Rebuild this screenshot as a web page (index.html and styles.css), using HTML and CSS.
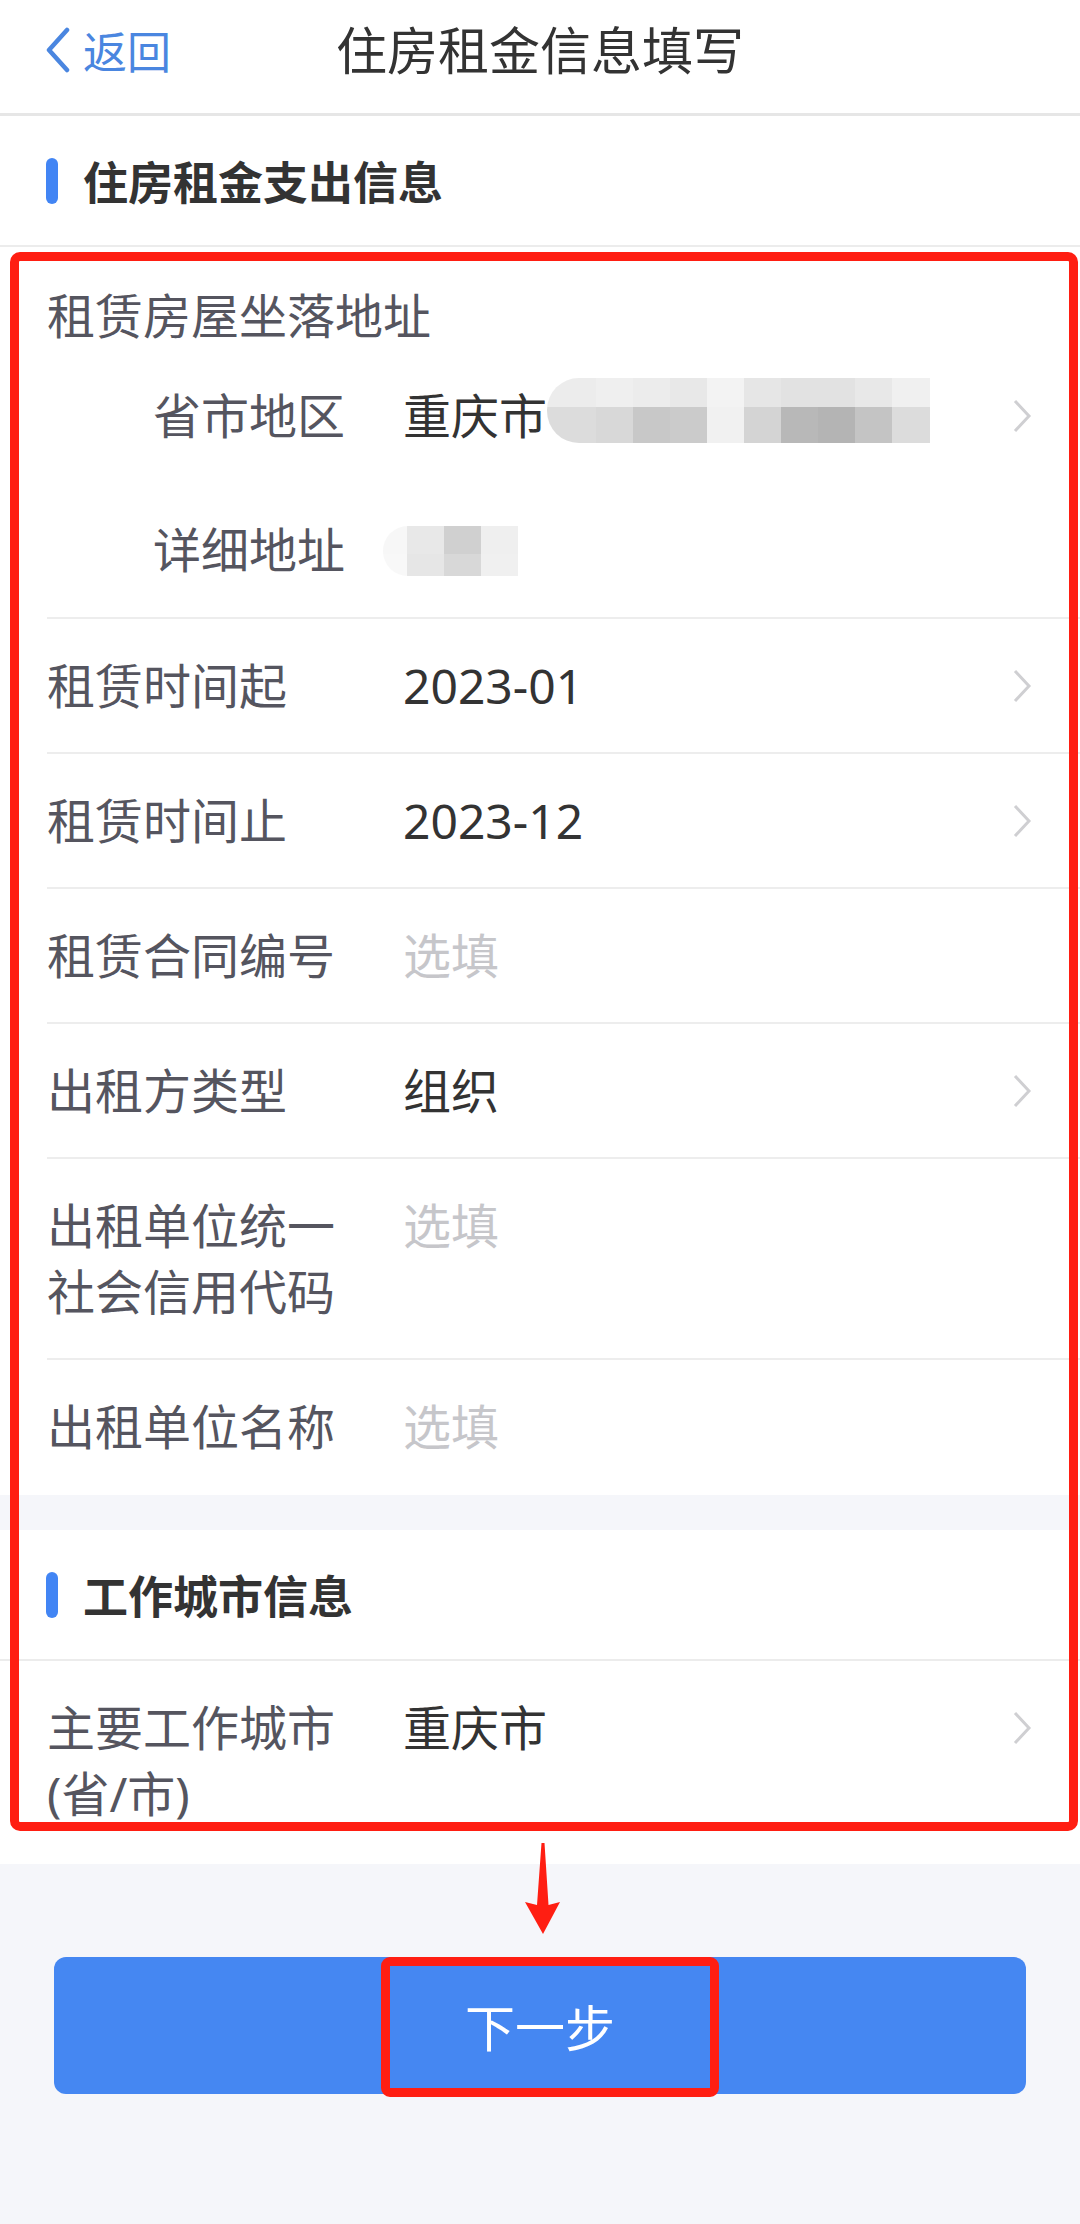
FILE: index.html
```html
<!DOCTYPE html>
<html>
<head>
    <meta charset="utf-8">
    <meta name="viewport" content="width=device-width,initial-scale=1.0"/>
    <title>住房租金信息填写</title>
    <link rel="stylesheet" href="styles.css">
</head>
<body>
    <div class="page">

        <div class="header">
            <div class="back">
                <svg width="26" height="46" viewBox="0 0 26 46"><path d="M22 3 L4 23 L22 43" fill="none" stroke="#4a86e0" stroke-width="4.5" stroke-linecap="round" stroke-linejoin="round"/></svg>
                <span>返回</span>
            </div>
            <div class="title">住房租金信息填写</div>
            <div></div>
        </div>

        <div class="section-title"><i class="bar"></i>住房租金支出信息</div>

        <div class="list">
            <div class="group">
                <div class="group-title">租赁房屋坐落地址</div>
                <div class="row sub">
                    <span class="label">省市地区</span>
                    <span class="value">重庆市<span class="mosaic mosaic-big"></span></span>
                    <svg class="more" width="22" height="34" viewBox="0 0 22 34"><path d="M4 2 L18 17 L4 32" fill="none" stroke="#cfcfd2" stroke-width="3"/></svg>
                </div>
                <div class="row sub">
                    <span class="label">详细地址</span>
                    <span class="value"><span class="mosaic mosaic-small"></span></span>
                </div>
            </div>
            <div class="row">
                <span class="label">租赁时间起</span>
                <span class="value">2023-01</span>
                <svg class="more" width="22" height="34" viewBox="0 0 22 34"><path d="M4 2 L18 17 L4 32" fill="none" stroke="#cfcfd2" stroke-width="3"/></svg>
            </div>
            <div class="row">
                <span class="label">租赁时间止</span>
                <span class="value">2023-12</span>
                <svg class="more" width="22" height="34" viewBox="0 0 22 34"><path d="M4 2 L18 17 L4 32" fill="none" stroke="#cfcfd2" stroke-width="3"/></svg>
            </div>
            <div class="row">
                <span class="label">租赁合同编号</span>
                <span class="value empty">选填</span>
            </div>
            <div class="row">
                <span class="label">出租方类型</span>
                <span class="value">组织</span>
                <svg class="more" width="22" height="34" viewBox="0 0 22 34"><path d="M4 2 L18 17 L4 32" fill="none" stroke="#cfcfd2" stroke-width="3"/></svg>
            </div>
            <div class="row">
                <span class="label">出租单位统一社会信用代码</span>
                <span class="value empty">选填</span>
            </div>
            <div class="row last">
                <span class="label">出租单位名称</span>
                <span class="value empty">选填</span>
            </div>
        </div>

        <div class="gap"></div>

        <div class="section-title"><i class="bar"></i>工作城市信息</div>

        <div class="list">
            <div class="row last end">
                <span class="label">主要工作城市(省/市)</span>
                <span class="value">重庆市</span>
                <svg class="more" width="22" height="34" viewBox="0 0 22 34"><path d="M4 2 L18 17 L4 32" fill="none" stroke="#cfcfd2" stroke-width="3"/></svg>
            </div>
        </div>

        <div class="footer">
            <button class="next">下一步<span class="mark-btn"></span></button>
        </div>

        <!-- annotation marks -->
        <div class="mark-box"></div>
        <svg class="mark-arrow" width="38" height="94" viewBox="0 0 38 94"><polygon points="17.5,1 20.5,1 24.5,63 36,60 19,92 1,60 13,63" fill="#ff1e12"/></svg>
    </div>
</body>
</html>
```

FILE: styles.css
```css
* {
    margin: 0;
    padding: 0;
    box-sizing: border-box;
}

body {
    background: #f5f6fa;
    font-family: "Noto Sans", "Noto Sans CJK SC", sans-serif;
    color: #333;
}

.page {
    position: relative;
    width: 1080px;
    min-height: 2224px;
}

.header {
    display: grid;
    grid-template-columns: 1fr auto 1fr;
    align-items: center;
    height: 116px;
    padding-bottom: 13px;
    background: white;
    border-bottom: 3px solid #e6e6e6;
}

.back {
    display: flex;
    align-items: center;
    padding-left: 45px;
    color: #4a86e0;
    font-size: 44px;
}

.back svg {
    margin-right: 12px;
}

.title {
    font-size: 51px;
    line-height: 100px;
    color: #333;
}

.section-title {
    display: flex;
    align-items: center;
    height: 131px;
    padding-left: 46px;
    background: white;
    border-bottom: 2px solid #ececec;
    font-size: 45px;
    font-weight: bold;
    color: #333;
}

.bar {
    width: 12px;
    height: 46px;
    margin-right: 25px;
    border-radius: 6px;
    background: #4285f4;
}

.list {
    background: white;
}

.group {
    margin-left: 47px;
    border-bottom: 2px solid #ededed;
}

.group-title {
    padding-top: 36px;
    font-size: 48px;
    line-height: 66px;
    color: #55555f;
}

.row {
    display: flex;
    align-items: flex-start;
    margin-left: 47px;
    padding: 34px 47px 33px 0;
    border-bottom: 2px solid #ededed;
    font-size: 48px;
    line-height: 66px;
}

.row.sub {
    margin-left: 0;
    padding-left: 106px;
    padding-bottom: 34px;
    border-bottom: none;
}

.row.last {
    border-bottom: none;
    padding-bottom: 35px;
}

.row.end {
    padding-bottom: 37px;
}

.label {
    width: 320px;
    margin-right: 36px;
    color: #55555f;
}

.row.sub .label {
    width: 214px;
}

.value {
    display: flex;
    align-items: flex-start;
    flex: 1;
    color: #333;
}

.value.empty {
    color: #c6c6ca;
}

.more {
    margin-top: 16px;
}

.mosaic {
    display: block;
}

.mosaic-big {
    width: 383px;
    height: 65px;
    margin-top: -5px;
    border-radius: 32px 0 0 32px;
    background-image:
        linear-gradient(to right, #ececec 0 49px, #efefef 49px 86px, #ececec 86px 123px, #e8e8e8 123px 160px, #f3f3f3 160px 197px, #e6e6e6 197px 234px, #e2e2e2 234px 308px, #e8e8e8 308px 345px, #f0f0f0 345px),
        linear-gradient(to right, #dcdcdc 0 49px, #d8d8d8 49px 86px, #c8c8c8 86px 123px, #cbcbcb 123px 160px, #f1f1f1 160px 197px, #d4d4d4 197px 234px, #b8b8b8 234px 271px, #b4b4b4 271px 308px, #c4c4c4 308px 345px, #dcdcdc 345px);
    background-size: 100% 29px, 100% 36px;
    background-position: top, bottom;
    background-repeat: no-repeat;
}

.mosaic-small {
    width: 135px;
    height: 50px;
    margin-top: 9px;
    margin-left: -20px;
    border-radius: 25px 0 0 25px;
    background-image:
        linear-gradient(to right, #f7f7f7 0 24px, #e8e8e8 24px 61px, #d0d0d0 61px 98px, #efefef 98px),
        linear-gradient(to right, #f8f8f8 0 24px, #e6e6e6 24px 61px, #d8d8d8 61px 98px, #f0f0f0 98px);
    background-size: 100% 28px, 100% 22px;
    background-position: top, bottom;
    background-repeat: no-repeat;
}

.gap {
    height: 35px;
}

.footer {
    padding: 93px 54px 0 54px;
}

.next {
    position: relative;
    display: block;
    width: 100%;
    height: 137px;
    border: none;
    border-radius: 12px;
    background: #4587f2;
    color: white;
    font-family: "Noto Sans", "Noto Sans CJK SC", sans-serif;
    font-size: 50px;
}

.mark-btn {
    position: absolute;
    left: 327px;
    top: 0;
    width: 338px;
    height: 140px;
    border: 9px solid #ff1e12;
    border-radius: 9px;
}

.mark-box {
    position: absolute;
    left: 10px;
    top: 252px;
    width: 1068px;
    height: 1579px;
    border: 9px solid #ff1e12;
    border-radius: 10px;
}

.mark-arrow {
    position: absolute;
    left: 524px;
    top: 1842px;
}
```
